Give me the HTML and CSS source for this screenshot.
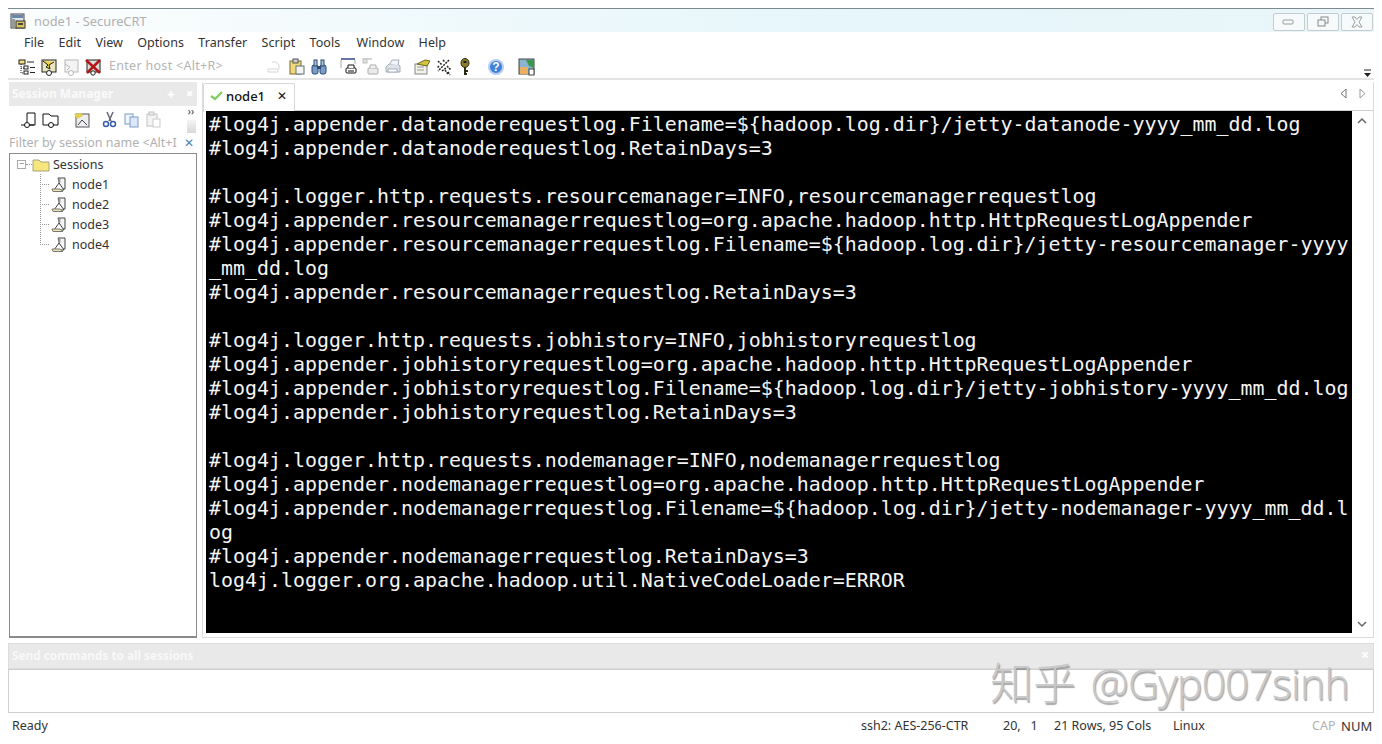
FILE: index.html
```html
<!DOCTYPE html>
<html lang="en">
<head>
<meta charset="utf-8">
<title>node1 - SecureCRT</title>
<link rel="stylesheet" href="styles.css">
</head>
<body>
<div class="app">
  <header class="titlebar">
    <svg class="app-icon" width="16" height="16" viewBox="0 0 16 16"><rect x="1" y="1" width="13" height="14" fill="#dfe6ee" stroke="#444"/><rect x="2" y="2" width="11" height="3" fill="#6b87a8"/><rect x="2" y="6" width="3" height="8" fill="#999"/><rect x="6" y="8" width="9" height="7" fill="#d8c25a" stroke="#333"/><rect x="8" y="10" width="5" height="2" fill="#444"/></svg>
    <span class="title-text">node1 - SecureCRT</span>
    <div class="win-btns">
      <div class="win-btn"><svg width="14" height="8" viewBox="0 0 14 8"><rect x="1" y="2" width="10" height="4" rx="1" fill="none" stroke="#9a9a9a"/></svg></div>
      <div class="win-btn"><svg width="14" height="12" viewBox="0 0 14 12"><rect x="5" y="1" width="7" height="6" fill="none" stroke="#8a8a8a"/><rect x="2" y="4" width="7" height="6" fill="#f4f8fa" stroke="#8a8a8a"/></svg></div>
      <div class="win-btn"><svg width="14" height="12" viewBox="0 0 14 12"><path d="M2 1h3l2 2.500 2-2.500h3l-3 5 3 5h-3l-2-2.500-2 2.500h-3l3-5z" fill="none" stroke="#a0a0a0"/></svg></div>
    </div>
  </header>

  <nav class="menubar">
    <span>File</span><span>Edit</span><span>View</span><span>Options</span><span>Transfer</span><span>Script</span><span class="menu-tools">Tools</span><span>Window</span><span>Help</span>
  </nav>

  <div class="toolbar">
    <div class="tool-group first">
      <svg class="ico" viewBox="0 0 18 18"><rect x="1" y="2" width="6" height="4" fill="#f3e27a" stroke="#222"/><path d="M3 6v9h3M3 10h3" stroke="#222" fill="none" stroke-dasharray="1 1"/><rect x="6" y="8" width="4" height="3" fill="#fff" stroke="#222"/><rect x="6" y="13" width="4" height="3" fill="#fff" stroke="#222"/><path d="M9 4h7M12 9.500h5M12 14.500h5" stroke="#222"/></svg>
      <svg class="ico" viewBox="0 0 18 18"><rect x="2" y="2" width="14" height="12" fill="#e8e8c0" stroke="#222"/><path d="M3 3l5 4-2 2 4 2-1-4 5-3" fill="#f0d040" stroke="#222"/><circle cx="9" cy="15" r="2.500" fill="#fff" stroke="#222"/></svg>
      <svg class="ico faded" viewBox="0 0 18 18"><rect x="3" y="2" width="13" height="12" fill="#eee" stroke="#888"/><path d="M3 6l5 3-3 3" fill="none" stroke="#888"/><circle cx="9" cy="15" r="2.500" fill="#fff" stroke="#888"/></svg>
      <svg class="ico" viewBox="0 0 18 18"><rect x="3" y="2" width="13" height="12" fill="#ddd" stroke="#222"/><path d="M2 2l14 13M16 2L3 15" stroke="#b01818" stroke-width="2.500"/><circle cx="9" cy="15" r="2.200" fill="#fff" stroke="#222"/></svg>
    </div>
    <span class="host-hint">Enter host &lt;Alt+R&gt;</span>
    <div class="tool-group t2">
      <svg class="ico faded" viewBox="0 0 18 18"><path d="M2 11h10v3H2zM6 4h4l3 3v4" fill="none" stroke="#bbb"/></svg>
      <svg class="ico" viewBox="0 0 18 18"><rect x="2" y="3" width="11" height="13" fill="#efd878" stroke="#7a6a30"/><rect x="5" y="1" width="5" height="4" fill="#ccc" stroke="#555"/><rect x="8" y="8" width="8" height="8" fill="#f4f4f4" stroke="#607080"/></svg>
      <svg class="ico" viewBox="0 0 18 18"><rect x="2" y="7" width="6" height="9" rx="2" fill="#7a9cc8" stroke="#2a4a70"/><rect x="10" y="7" width="6" height="9" rx="2" fill="#7a9cc8" stroke="#2a4a70"/><rect x="4" y="2" width="3" height="6" fill="#a8c0dc" stroke="#2a4a70"/><rect x="11" y="2" width="3" height="6" fill="#a8c0dc" stroke="#2a4a70"/><rect x="7" y="8" width="4" height="3" fill="#2a4a70"/></svg>
    </div>
    <div class="tool-group t3">
      <svg class="ico" viewBox="0 0 18 18"><path d="M1 1h14" stroke="#334a88" stroke-width="1.500"/><path d="M1 2v8M15 2v4" stroke="#aaa"/><rect x="6" y="10" width="10" height="5" rx="1" fill="#fff" stroke="#111"/><path d="M8 10V7h6v3" fill="#fff" stroke="#111"/><path d="M8 13h6" stroke="#111"/></svg>
      <svg class="ico faded" viewBox="0 0 18 18"><path d="M1 1h9" stroke="#777"/><rect x="1" y="1" width="4" height="4" fill="#ccc" stroke="#999"/><rect x="6" y="10" width="10" height="6" rx="1" fill="#ddd" stroke="#777"/><path d="M8 10V7h6v3" fill="#eee" stroke="#777"/></svg>
      <svg class="ico faded" viewBox="0 0 18 18"><path d="M2 9l3-3h9l2 2v6H2z" fill="#c8d0da" stroke="#6a7a8a"/><path d="M6 6l2-4h7l-1 5" fill="#eef" stroke="#6a7a8a"/><rect x="4" y="11" width="9" height="3" fill="#fff" stroke="#6a7a8a"/></svg>
    </div>
    <div class="tool-group t4">
      <svg class="ico" viewBox="0 0 18 18"><rect x="2" y="6" width="12" height="10" fill="#f2f2e8" stroke="#888"/><path d="M4 9h7M4 12h7" stroke="#999"/><path d="M4 6l8-4 5 1-3 5z" fill="#d8c040" stroke="#6a6a20"/></svg>
      <svg class="ico" viewBox="0 0 18 18"><path d="M3 3l4 4M14 2l-4 4-3 3-4 4M7 13l4-3M12 8l4 4M4 8l-2 2M13 14l2 3M8 2l2 2M10 12l3 4" stroke="#222" stroke-width="1.500" stroke-dasharray="2 1" fill="none"/></svg>
      <svg class="ico" viewBox="0 0 18 18"><ellipse cx="8" cy="5" rx="4" ry="4.500" fill="#8a7c2a" stroke="#2a2a10"/><rect x="6.500" y="3" width="3" height="2" fill="#222"/><path d="M8 9v8M8 13h3M8 16h2" stroke="#2a2a10" stroke-width="2"/></svg>
    </div>
    <div class="tool-group t5">
      <svg class="ico" viewBox="0 0 18 18"><circle cx="9" cy="9" r="7" fill="#3f82d8" stroke="#b4cdf0" stroke-width="2"/><text x="9" y="13" class="help-q">?</text></svg>
    </div>
    <div class="tool-group t6">
      <svg class="ico" viewBox="0 0 18 18"><rect x="1" y="1" width="15" height="15" fill="#8ab4d0" stroke="#444"/><path d="M8 2h8v8l-5-2z" fill="#3a9a4a"/><rect x="2" y="9" width="8" height="7" fill="#e8b060"/><rect x="11" y="11" width="5" height="6" fill="#fff" stroke="#444"/></svg>
    </div>
    <svg class="overflow" width="9" height="9" viewBox="0 0 9 9"><path d="M1 1h7" stroke="#222"/><path d="M1 4h7L4.500 8z" fill="#222"/></svg>
  </div>

  <main class="workspace">
    <aside class="sessions">
      <div class="panel-head">
        <span>Session Manager</span>
        <span class="head-icons"><b>ᚐ</b><b>×</b></span>
      </div>
      <div class="session-tools">
        <svg class="ico" viewBox="0 0 18 18"><path d="M7 2h8v12H7z" fill="#fff" stroke="#111"/><path d="M1 14h13" stroke="#111"/><circle cx="7" cy="14" r="2.500" fill="#fff" stroke="#111"/></svg>
        <svg class="ico" viewBox="0 0 18 18"><path d="M1 3h6l2 2h7v9H1z" fill="#fff" stroke="#111"/><circle cx="9" cy="14" r="2.500" fill="#fff" stroke="#111"/></svg>
        <svg class="ico gap1" viewBox="0 0 18 18"><rect x="3" y="3" width="13" height="13" fill="#eee" stroke="#555"/><path d="M1 3l7-1 2 3-6 3z" fill="#e0cf50"/><path d="M5 14l4-5 5 5" fill="none" stroke="#445"/></svg>
        <svg class="ico gap2" viewBox="0 0 18 18"><path d="M6 1l4 9M12 1L8 10" stroke="#667" stroke-width="1.500"/><circle cx="5" cy="13" r="2.500" fill="none" stroke="#3a5ea8" stroke-width="1.500"/><circle cx="12" cy="13" r="2.500" fill="none" stroke="#3a5ea8" stroke-width="1.500"/></svg>
        <svg class="ico" viewBox="0 0 18 18"><rect x="2" y="3" width="8" height="10" fill="#f0f6ff" stroke="#7a9ac8"/><rect x="7" y="6" width="8" height="10" fill="#dce8f8" stroke="#7a9ac8"/></svg>
        <svg class="ico faded" viewBox="0 0 18 18"><rect x="2" y="3" width="10" height="12" fill="#eee" stroke="#999"/><rect x="4" y="1" width="5" height="3" fill="#ddd" stroke="#999"/><rect x="8" y="8" width="7" height="8" fill="#fff" stroke="#aaa"/></svg>
        <span class="grip">››</span>
      </div>
      <div class="filter">
        <span class="filter-text">Filter by session name &lt;Alt+I</span>
        <span class="filter-x">✕</span>
      </div>
      <div class="tree">
        <div class="tree-root">
          <span class="expander">−</span>
          <svg class="folder" width="18" height="15" viewBox="0 0 18 15"><path d="M1 3h6l2 2h8v9H1z" fill="#f5e67e" stroke="#a8a27a"/></svg>
          <span>Sessions</span>
        </div>
        <ul class="tree-list">
          <li><svg class="node-ico" width="18" height="17" viewBox="0 0 18 17"><path d="M8 2h7v11h-4z" fill="#f6f6f6" stroke="#444"/><path d="M8.500 2.500h2v4l-2 1z" fill="#999"/><path d="M4 14l5-7 5 7z" fill="#fff" stroke="#444"/><path d="M2 13h8l3 2.500H3z" fill="#eee3a8" stroke="#777"/></svg>node1</li>
          <li><svg class="node-ico" width="18" height="17" viewBox="0 0 18 17"><path d="M8 2h7v11h-4z" fill="#f6f6f6" stroke="#444"/><path d="M8.500 2.500h2v4l-2 1z" fill="#999"/><path d="M4 14l5-7 5 7z" fill="#fff" stroke="#444"/><path d="M2 13h8l3 2.500H3z" fill="#eee3a8" stroke="#777"/></svg>node2</li>
          <li><svg class="node-ico" width="18" height="17" viewBox="0 0 18 17"><path d="M8 2h7v11h-4z" fill="#f6f6f6" stroke="#444"/><path d="M8.500 2.500h2v4l-2 1z" fill="#999"/><path d="M4 14l5-7 5 7z" fill="#fff" stroke="#444"/><path d="M2 13h8l3 2.500H3z" fill="#eee3a8" stroke="#777"/></svg>node3</li>
          <li><svg class="node-ico" width="18" height="17" viewBox="0 0 18 17"><path d="M8 2h7v11h-4z" fill="#f6f6f6" stroke="#444"/><path d="M8.500 2.500h2v4l-2 1z" fill="#999"/><path d="M4 14l5-7 5 7z" fill="#fff" stroke="#444"/><path d="M2 13h8l3 2.500H3z" fill="#eee3a8" stroke="#777"/></svg>node4</li>
        </ul>
      </div>
    </aside>

    <section class="terminal-pane">
      <div class="tabstrip">
        <div class="tab">
          <svg width="13" height="10" viewBox="0 0 13 10"><path d="M1 5l4 3 7-7" fill="none" stroke="#7ccf5c" stroke-width="2.200"/></svg>
          <span class="tab-name">node1</span>
          <span class="tab-x">✕</span>
        </div>
        <div class="tab-nav">
          <svg width="8" height="11" viewBox="0 0 8 11"><path d="M6 1L1 5.500 6 10z" fill="none" stroke="#777"/></svg>
          <svg width="8" height="11" viewBox="0 0 8 11"><path d="M2 1l5 4.500L2 10z" fill="none" stroke="#999"/></svg>
        </div>
      </div>
      <div class="terminal-body">
<pre class="terminal">#log4j.appender.datanoderequestlog.Filename=${hadoop.log.dir}/jetty-datanode-yyyy_mm_dd.log
#log4j.appender.datanoderequestlog.RetainDays=3

#log4j.logger.http.requests.resourcemanager=INFO,resourcemanagerrequestlog
#log4j.appender.resourcemanagerrequestlog=org.apache.hadoop.http.HttpRequestLogAppender
#log4j.appender.resourcemanagerrequestlog.Filename=${hadoop.log.dir}/jetty-resourcemanager-yyyy
_mm_dd.log
#log4j.appender.resourcemanagerrequestlog.RetainDays=3

#log4j.logger.http.requests.jobhistory=INFO,jobhistoryrequestlog
#log4j.appender.jobhistoryrequestlog=org.apache.hadoop.http.HttpRequestLogAppender
#log4j.appender.jobhistoryrequestlog.Filename=${hadoop.log.dir}/jetty-jobhistory-yyyy_mm_dd.log
#log4j.appender.jobhistoryrequestlog.RetainDays=3

#log4j.logger.http.requests.nodemanager=INFO,nodemanagerrequestlog
#log4j.appender.nodemanagerrequestlog=org.apache.hadoop.http.HttpRequestLogAppender
#log4j.appender.nodemanagerrequestlog.Filename=${hadoop.log.dir}/jetty-nodemanager-yyyy_mm_dd.l
og
#log4j.appender.nodemanagerrequestlog.RetainDays=3
log4j.logger.org.apache.hadoop.util.NativeCodeLoader=ERROR</pre>
        <div class="scrollbar">
          <svg width="10" height="7" viewBox="0 0 10 7"><path d="M1 6l4-4 4 4" fill="none" stroke="#666" stroke-width="1.500"/></svg>
          <svg width="10" height="7" viewBox="0 0 10 7"><path d="M1 1l4 4 4-4" fill="none" stroke="#666" stroke-width="1.500"/></svg>
        </div>
      </div>
    </section>
  </main>

  <section class="command">
    <div class="command-head"><span>Send commands to all sessions</span><span class="command-x">×</span></div>
    <div class="command-input"></div>
  </section>

  <footer class="statusbar">
    <span class="ready">Ready</span>
    <span class="st-cipher">ssh2: AES-256-CTR</span>
    <span class="st-pos">20,&nbsp;&nbsp;&nbsp;1</span>
    <span class="st-size">21 Rows, 95 Cols</span>
    <span class="st-os">Linux</span>
    <span class="st-cap">CAP</span>
    <span class="st-num">NUM</span>
  </footer>

  <div class="watermark">知乎 <span class="wm-latin">@Gyp007sinh</span></div>
</div>
</body>
</html>
```

FILE: styles.css
```css
* { box-sizing: border-box; }
html, body { margin: 0; height: 100%; background: #fff; overflow: hidden; }
body {
  font-family: "Noto Sans", "Open Sans", sans-serif;
  font-size: 12.5px;
  color: #333;
}
.app {
  position: relative;
  width: 1382px;
  height: 744px;
  padding: 8px 8px 0;
  display: flex;
  flex-direction: column;
}
.titlebar {
  height: 24px;
  border-top: 1px solid #7d8a8d;
  background: linear-gradient(90deg, #fbfdfd, #e6f6fb 60%, #e9f5f9);
  display: flex;
  align-items: center;
  padding-left: 2px;
  flex: none;
}
.app-icon { flex: none; }
.title-text { margin-left: 8px; color: #b0b0b0; font-size: 12.800px; }
.win-btns { margin-left: auto; display: flex; gap: 2px; margin-top: 2px; margin-right: 1px; }
.win-btn {
  width: 32px; height: 18px;
  border: 1px solid #c2cdd0; border-radius: 2px;
  background: #f6fafb;
  display: flex; align-items: center; justify-content: center;
}
.menubar {
  height: 20px;
  display: flex;
  align-items: center;
  padding-left: 16px;
  gap: 14.300px;
  letter-spacing: .05px;
  flex: none;
}
.menu-tools { margin-right: 2px; }
.toolbar {
  height: 28px;
  display: flex;
  align-items: center;
  padding: 4px 0 0 10px;
  flex: none;
  position: relative;
  border-bottom: 2px solid #e4e4e4;
}
.tool-group { display: flex; gap: 4px; align-items: center; }
.ico { width: 18px; height: 18px; flex: none; }
.faded { opacity: .6; }
.host-hint { color: #b4b4b4; margin: 0 0 3px 7px; width: 157px; letter-spacing: .3px; }
.t3 { margin-left: 12px; }
.t4 { margin-left: 11px; }
.t5 { margin-left: 12px; }
.t6 { margin-left: 13px; }
.help-q { fill: #fff; font: bold 12px "Liberation Sans", sans-serif; text-anchor: middle; }
.overflow { position: absolute; right: 2px; bottom: 0; }
.workspace {
  flex: none;
  height: 558px;
  display: flex;
  gap: 5px;
  padding: 2px 0 0 1px;
}
.sessions { width: 188px; flex: none; display: flex; flex-direction: column; }
.panel-head {
  height: 24px;
  background: #e9e9e9;
  color: #fafafa;
  font-size: 12px;
  font-weight: 700;
  display: flex; align-items: center; justify-content: space-between;
  padding: 0 4px 1px 3px;
  flex: none;
}
.head-icons { display: flex; gap: 12px; color: #fff; }
.session-tools {
  height: 27px;
  display: flex; align-items: center; gap: 4px;
  padding-left: 11px;
  flex: none;
  position: relative;
}
.session-tools::after {
  content: "";
  position: absolute;
  right: 1px; bottom: 0;
  width: 9px; height: 13px;
  background: linear-gradient(#f4f4f4, #d8d8d8);
}
.gap1 { margin-left: 9px; }
.gap2 { margin-left: 6px; }
.grip { position: absolute; right: 3px; top: 0; font-size: 10px; color: #333; line-height: 10px; }
.filter {
  height: 18px;
  display: flex; align-items: center; justify-content: space-between;
  color: #b0b0b0;
  flex: none;
}
.filter-text { white-space: nowrap; overflow: hidden; width: 170px; }
.filter-x { color: #4d84b8; margin-right: 3px; font-size: 12px; }
.tree {
  flex: 1;
  margin-top: 2px;
  border: 1px solid #8b8b8b;
  border-bottom-width: 2px;
  background: #fff;
  padding: 0 0 0 7px;
  position: relative;
}
.tree-root { display: flex; align-items: center; height: 20px; }
.expander {
  width: 9px; height: 9px;
  border: 1px solid #aaa;
  color: #777;
  font-size: 9px; line-height: 6px; text-align: center;
  margin-right: 6px;
  flex: none;
  position: relative;
}
.expander::after {
  content: "";
  position: absolute;
  left: 8px; top: 3px;
  width: 6px;
  border-top: 1px dotted #999;
}
.folder { margin-right: 3px; flex: none; }
.tree-list { list-style: none; margin: 0; padding: 0 0 0 23px; }
.tree-list li {
  height: 20px;
  display: flex; align-items: center;
  padding-left: 10px;
  background:
    repeating-linear-gradient(90deg, #999 0 1px, transparent 1px 2px) left center / 10px 1px no-repeat,
    repeating-linear-gradient(#999 0 1px, transparent 1px 2px) left top / 1px 100% no-repeat;
}
.tree-list li:last-child {
  background:
    repeating-linear-gradient(90deg, #999 0 1px, transparent 1px 2px) left center / 10px 1px no-repeat,
    repeating-linear-gradient(#999 0 1px, transparent 1px 2px) left top / 1px 50% no-repeat;
}
.node-ico { margin-right: 4px; flex: none; }
.terminal-pane {
  flex: 1;
  display: flex;
  flex-direction: column;
  border: 1px solid #dcdcdc;
  border-top: 0;
  min-width: 0;
}
.tabstrip {
  height: 29px;
  display: flex;
  border-bottom: 1px solid #cfcfcf;
  flex: none;
  justify-content: space-between;
}
.tab {
  width: 92px;
  height: 29px;
  margin-top: 1px;
  border: 1px solid #d8d8d8;
  border-bottom: 0;
  border-radius: 2px 2px 0 0;
  background: #fff;
  display: flex; align-items: center;
  padding: 0 0 5px 6px;
  color: #111;
}
.tab-name { font-weight: 500; margin-left: 3px; font-size: 13px; }
.tab-x { margin-left: 12px; font-size: 12px; color: #111; }
.tab-nav { display: flex; gap: 10px; align-items: center; padding: 0 7px 5px 0; }
.terminal-body {
  flex: 1;
  display: flex;
  padding: 0 1px 4px 3px;
  min-height: 0;
}
.terminal {
  margin: 0;
  flex: 1;
  background: #000;
  color: #f4f4f4;
  font-family: "DejaVu Sans Mono", monospace;
  font-size: 19.930px;
  line-height: 24px;
  padding: 2px 0 0 3px;
  overflow: hidden;
}
.scrollbar {
  width: 20px;
  flex: none;
  display: flex;
  flex-direction: column;
  justify-content: space-between;
  align-items: center;
  padding: 6px 0 5px;
}
.command { flex: none; margin-top: 5px; }
.command-head {
  height: 26px;
  background: #e9e9e9;
  border: 1px solid #dcdcdc;
  color: #f8f8f8;
  font-size: 11.800px;
  font-weight: 700;
  display: flex; align-items: center; justify-content: space-between;
  padding: 0 4px 3px 3px;
}
.command-x { color: #fff; font-size: 14px; }
.command-input {
  height: 44px;
  border: 1px solid #cfcfcf;
  background: #fff;
}
.statusbar {
  height: 25px;
  display: flex;
  align-items: center;
  flex: none;
  padding-left: 4px;
}
.ready { width: 849px; }
.st-cipher { width: 142px; }
.st-pos { width: 51px; }
.st-size { width: 119px; }
.st-os { width: 139px; }
.st-cap { color: #b0b0b0; width: 29px; }
.st-num { font-size: 13px; }
.watermark {
  position: absolute;
  left: 990px;
  top: 650px;
  font-family: "Noto Sans CJK SC", "Noto Sans", sans-serif;
  font-size: 43px;
  font-weight: 300;
  line-height: 60px;
  color: rgba(200,200,200,.95);
  text-shadow: 1px 2px 1px rgba(110,110,110,.6);
  white-space: nowrap;
}
.wm-latin { margin-left: 5px; letter-spacing: -1.100px; font-family: "Noto Sans", sans-serif; font-weight: 300; }
```
